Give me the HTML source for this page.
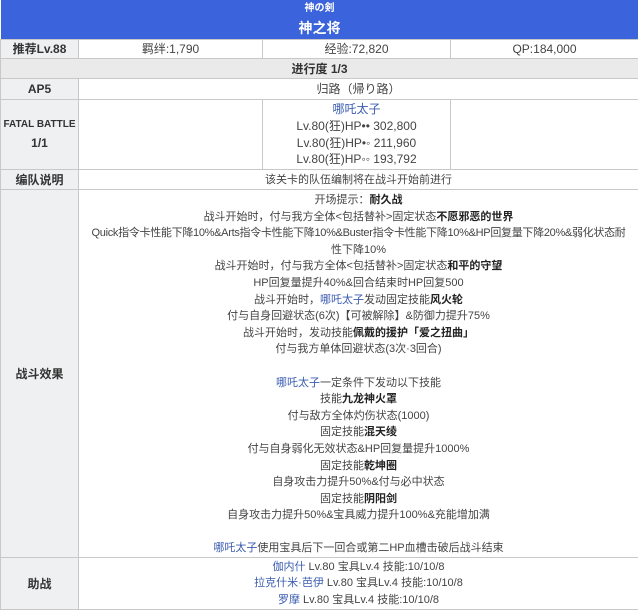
<!DOCTYPE html>
<html><head><style>
body{margin:0;width:638px;height:612px;background:#fff;font-family:"Liberation Sans","Noto Sans CJK SC",sans-serif;color:#444;font-size:11px;overflow:hidden}
table{border-collapse:collapse;width:638px;table-layout:fixed;font-size:11px}
td{border:1px solid #c8c8c8;text-align:center;padding:0;vertical-align:middle;font-size:11px;line-height:14px}
.h{background:#3b64dc;color:#fff;border:none}
.l{background:#eef0f2;font-weight:bold;color:#333}
.g{background:#eaeaea;font-weight:bold;color:#333}
.a{color:#3a5cb0}
b{color:#222}
.e div{height:16.6px;line-height:16.6px;white-space:nowrap;overflow:hidden}
.m{font-size:12px}
</style></head><body>
<table>
<col style="width:78px"><col style="width:184px"><col style="width:188px"><col style="width:188px">
<tr><td class="h" colspan="4" style="height:17px;font-size:10px;font-weight:bold;line-height:17px">神の剣</td></tr>
<tr><td class="h" colspan="4" style="height:22px;font-size:14px;font-weight:bold">神之将</td></tr>
<tr style="height:19px"><td class="l m">推荐Lv.88</td><td class="m">羁绊:1,790</td><td class="m">经验:72,820</td><td class="m">QP:184,000</td></tr>
<tr style="height:20px"><td class="g m" colspan="4">进行度 1/3</td></tr>
<tr style="height:21px"><td class="l m">AP5</td><td colspan="3" class="m">归路（帰り路）</td></tr>
<tr style="height:70px"><td class="l" style="font-size:10px;line-height:18px">FATAL BATTLE<br><span style="font-size:12px">1/1</span></td><td></td><td style="line-height:16.8px;font-size:12px"><span class="a">哪吒太子</span><br>Lv.80(狂)HP•• 302,800<br>Lv.80(狂)HP•◦ 211,960<br>Lv.80(狂)HP◦◦ 193,792</td><td></td></tr>
<tr style="height:20px"><td class="l m">编队说明</td><td colspan="3">该关卡的队伍编制将在战斗开始前进行</td></tr>
<tr style="height:368px"><td class="l m">战斗效果</td><td colspan="3" class="e" style="vertical-align:top;padding-top:2px">
<div>开场提示：<b>耐久战</b></div>
<div>战斗开始时，付与我方全体&lt;包括替补&gt;固定状态<b>不愿邪恶的世界</b></div>
<div style="letter-spacing:-0.3px">Quick指令卡性能下降10%&amp;Arts指令卡性能下降10%&amp;Buster指令卡性能下降10%&amp;HP回复量下降20%&amp;弱化状态耐</div>
<div>性下降10%</div>
<div>战斗开始时，付与我方全体&lt;包括替补&gt;固定状态<b>和平的守望</b></div>
<div>HP回复量提升40%&amp;回合结束时HP回复500</div>
<div>战斗开始时，<span class="a">哪吒太子</span>发动固定技能<b>风火轮</b></div>
<div>付与自身回避状态(6次)【可被解除】&amp;防御力提升75%</div>
<div>战斗开始时，发动技能<b>佩戴的援护「爱之扭曲」</b></div>
<div>付与我方单体回避状态(3次·3回合)</div>
<div></div>
<div><span class="a">哪吒太子</span>一定条件下发动以下技能</div>
<div>技能<b>九龙神火罩</b></div>
<div>付与敌方全体灼伤状态(1000)</div>
<div>固定技能<b>混天绫</b></div>
<div>付与自身弱化无效状态&amp;HP回复量提升1000%</div>
<div>固定技能<b>乾坤圈</b></div>
<div>自身攻击力提升50%&amp;付与必中状态</div>
<div>固定技能<b>阴阳剑</b></div>
<div>自身攻击力提升50%&amp;宝具威力提升100%&amp;充能增加满</div>
<div></div>
<div><span class="a">哪吒太子</span>使用宝具后下一回合或第二HP血槽击破后战斗结束</div>
</td></tr>
<tr style="height:52px"><td class="l m">助战</td><td colspan="3" class="e">
<div><span class="a">伽内什</span> Lv.80 宝具Lv.4 技能:10/10/8</div>
<div><span class="a">拉克什米·芭伊</span> Lv.80 宝具Lv.4 技能:10/10/8</div>
<div><span class="a">罗摩</span> Lv.80 宝具Lv.4 技能:10/10/8</div>
</td></tr>
</table>
</body></html>
